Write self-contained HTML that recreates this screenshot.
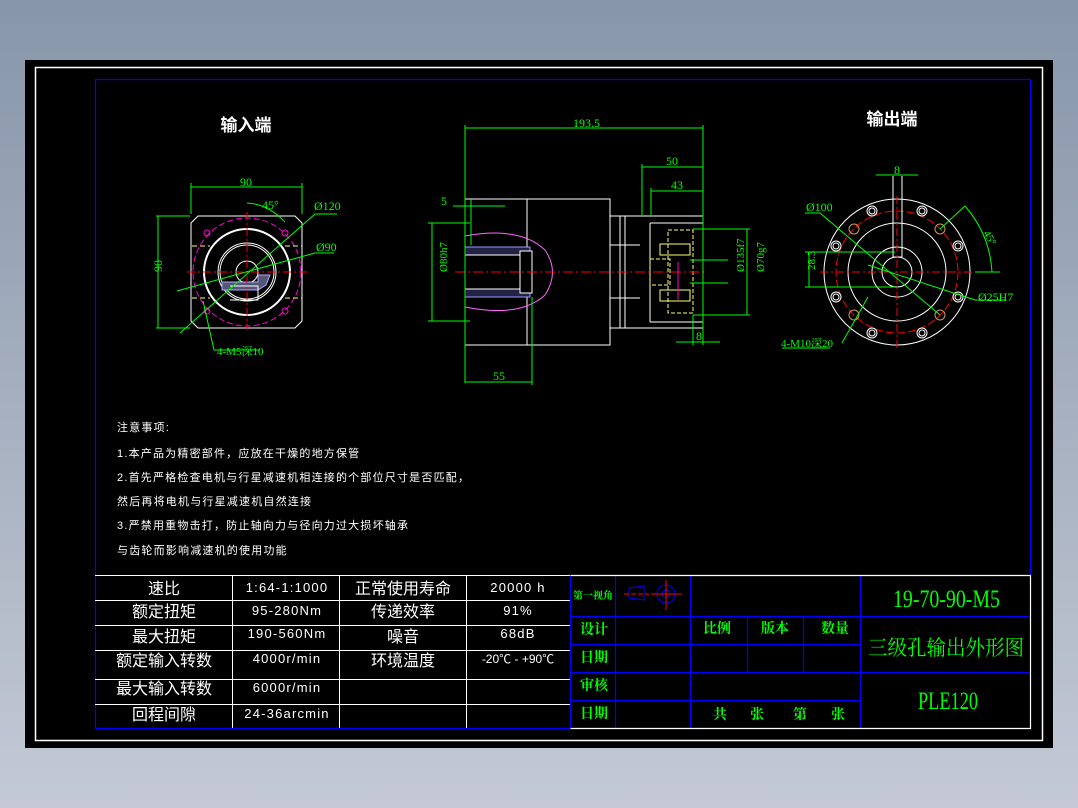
<!DOCTYPE html>
<html><head><meta charset="utf-8"><style>
html,body{margin:0;padding:0;width:1078px;height:808px;overflow:hidden;background:linear-gradient(#8796aa,#c4c9d5);}
svg{position:absolute;left:0;top:0}
.s{font-family:"Liberation Sans","Noto Sans CJK SC",sans-serif;}
.r{font-family:"Liberation Serif","Noto Serif CJK SC",serif;}
</style></head><body>
<svg width="1078" height="808" viewBox="0 0 1078 808">
<rect x="25" y="60" width="1028" height="688" fill="#000"/>
<rect x="35.5" y="67.5" width="1007" height="673" fill="none" stroke="#fff" stroke-width="1.5"/>
<rect x="95.5" y="79.5" width="935" height="649" fill="none" stroke="#00f" stroke-width="1.2"/>

<g class="s">
<text x="246" y="131" fill="#fff" font-size="17" font-weight="bold" text-anchor="middle">输入端</text>
<text x="892" y="125" fill="#fff" font-size="17" font-weight="bold" text-anchor="middle">输出端</text>
</g>

<!-- INPUT END VIEW -->
<g fill="none">
<path d="M198 216 H295 L302 223 V321 L295 328 H198 L191 321 V223 Z" stroke="#fff"/>
<circle cx="247" cy="272" r="54" stroke="#f0c" stroke-dasharray="6 3"/>
<circle cx="247" cy="272" r="43" stroke="#fff" stroke-width="2"/>
<circle cx="247" cy="272" r="29" stroke="#fff"/>
<circle cx="247" cy="272" r="27" stroke="#fff"/>
<circle cx="247" cy="272" r="11" stroke="#fff"/>
<path d="M222 282 L258 282 L258 275 L270 275 L266 285 L258 290 L222 290 Z" fill="#557" stroke="#aaf"/>
<path d="M230 286 H258 V300 H230" stroke="#fff"/>
<g stroke="#f0c"><circle cx="207" cy="233" r="3"/><circle cx="285" cy="233" r="3"/><circle cx="207" cy="311" r="3"/><circle cx="285" cy="311" r="3"/></g>
<g stroke="#f00" stroke-dasharray="8 3 2 3"><line x1="187" y1="272" x2="307" y2="272"/><line x1="247" y1="212" x2="247" y2="330"/></g>
<g stroke="#ff6" stroke-dasharray="5 3"><line x1="192" y1="246" x2="210" y2="246"/><line x1="285" y1="246" x2="302" y2="246"/><line x1="192" y1="298" x2="210" y2="298"/><line x1="285" y1="298" x2="302" y2="298"/></g>
<g stroke="#0f0">
<line x1="191" y1="183" x2="191" y2="214"/><line x1="302" y1="183" x2="302" y2="214"/><line x1="191" y1="187" x2="302" y2="187"/>
<line x1="156" y1="216" x2="190" y2="216"/><line x1="156" y1="328" x2="190" y2="328"/><line x1="158" y1="216" x2="158" y2="328"/>
<line x1="180" y1="333" x2="315" y2="214"/><line x1="315" y1="214" x2="337" y2="214"/>
<line x1="177" y1="291" x2="315" y2="253"/><line x1="315" y1="253" x2="334" y2="253"/>
<line x1="203" y1="301" x2="214" y2="350"/><line x1="214" y1="350" x2="260" y2="350"/>
<path d="M247 203 Q268 204 285 222"/>
</g>
</g>
<g fill="#0f0" font-size="12" class="r">
<text x="240" y="186">90</text><text x="314" y="210">Ø120</text><text x="316" y="251">Ø90</text>
<text x="262" y="209">45°</text>
<text x="156" y="278" transform="rotate(-90 156 272)">90</text>
<text x="217" y="355" font-size="11">4-M5深10</text>
</g>

<!-- SIDE VIEW -->
<g fill="none">
<rect x="465" y="199" width="145" height="146" stroke="#fff"/>
<line x1="527" y1="199" x2="527" y2="345" stroke="#fff"/>
<path d="M610 216 H703 V328 H610" stroke="#fff"/>
<line x1="620" y1="216" x2="620" y2="328" stroke="#fff"/><line x1="625" y1="216" x2="625" y2="328" stroke="#fff"/>
<line x1="610" y1="245" x2="640" y2="245" stroke="#fff"/><line x1="610" y1="298" x2="640" y2="298" stroke="#fff"/>
<path d="M650 223 V322" stroke="#fff"/><path d="M650 223 H703 M650 322 H703" stroke="#fff"/>
<rect x="668" y="230" width="25" height="83" stroke="#ff6" stroke-dasharray="4 2"/>
<rect x="650" y="259" width="20" height="26" stroke="#ff6" stroke-dasharray="4 2"/>
<path d="M660 244 H690 V255 H660 Z M660 290 H690 V301 H660 Z" stroke="#ff6"/>
<path d="M465 236 Q520 226 545 250 Q560 272 545 295 Q520 318 465 307" stroke="#f6f"/>
<rect x="465" y="247" width="65" height="50" fill="#224" stroke="#99f"/>
<rect x="465" y="255" width="55" height="34" fill="#000" stroke="#fff"/>
<rect x="520" y="251" width="12" height="42" fill="#000" stroke="#fff"/>
<line x1="455" y1="272" x2="705" y2="272" stroke="#f00" stroke-dasharray="10 3 2 3"/>
<line x1="678" y1="262" x2="678" y2="300" stroke="#f0c"/>
<g stroke="#0f0">
<line x1="465" y1="125" x2="465" y2="383"/><line x1="703" y1="125" x2="703" y2="345"/><line x1="465" y1="128" x2="703" y2="128"/>
<line x1="642" y1="164" x2="642" y2="215"/><line x1="642" y1="167" x2="703" y2="167"/>
<line x1="651" y1="188" x2="651" y2="215"/><line x1="651" y1="191" x2="703" y2="191"/>
<line x1="453" y1="206" x2="505" y2="206"/><line x1="471" y1="199" x2="471" y2="245"/>
<line x1="428" y1="223" x2="470" y2="223"/><line x1="428" y1="321" x2="470" y2="321"/><line x1="432" y1="223" x2="432" y2="321"/>
<line x1="465" y1="382" x2="532" y2="382"/><line x1="532" y1="297" x2="532" y2="385"/>
<line x1="693" y1="229" x2="750" y2="229"/><line x1="693" y1="315" x2="750" y2="315"/><line x1="747" y1="229" x2="747" y2="315"/>
<line x1="690" y1="260" x2="728" y2="260"/><line x1="690" y1="283" x2="728" y2="283"/>
<line x1="676" y1="342" x2="720" y2="342"/><line x1="693" y1="315" x2="693" y2="345"/>
</g>
</g>
<g fill="#0f0" font-size="12" class="r">
<text x="573" y="127">193.5</text><text x="666" y="165">50</text><text x="671" y="189">43</text>
<text x="441" y="205">5</text><text x="493" y="380">55</text><text x="696" y="340">8</text>
<text x="429" y="290" transform="rotate(-90 429 272)" font-size="11">Ø80h7</text>
<text x="726" y="290" transform="rotate(-90 726 272)" font-size="11">Ø135f7</text>
<text x="746" y="290" transform="rotate(-90 746 272)" font-size="11">Ø70g7</text>
</g>

<!-- OUTPUT END -->
<g fill="none">
<circle cx="897" cy="272" r="73" stroke="#fff"/>
<circle cx="897" cy="272" r="61" stroke="#f00" stroke-dasharray="8 3"/>
<circle cx="897" cy="272" r="49" stroke="#fff"/>
<circle cx="897" cy="272" r="25" stroke="#fff"/>
<circle cx="897" cy="272" r="15" stroke="#fff"/>
<g stroke="#fff">
<circle cx="872" cy="211" r="5"/><circle cx="922" cy="211" r="5"/><circle cx="836" cy="246" r="5"/><circle cx="958" cy="246" r="5"/>
<circle cx="836" cy="297" r="5"/><circle cx="958" cy="297" r="5"/><circle cx="872" cy="333" r="5"/><circle cx="922" cy="333" r="5"/>
<circle cx="872" cy="211" r="3"/><circle cx="922" cy="211" r="3"/><circle cx="836" cy="246" r="3"/><circle cx="958" cy="246" r="3"/>
<circle cx="836" cy="297" r="3"/><circle cx="958" cy="297" r="3"/><circle cx="872" cy="333" r="3"/><circle cx="922" cy="333" r="3"/>
</g>
<g stroke="#c96"><circle cx="854" cy="229" r="5"/><circle cx="940" cy="229" r="5"/><circle cx="854" cy="315" r="5"/><circle cx="940" cy="315" r="5"/></g>
<path d="M893 176 V257 M902 176 V257 M893 257 H902" stroke="#fff"/>
<g stroke="#f00" stroke-dasharray="8 3 2 3"><line x1="820" y1="272" x2="975" y2="272"/><line x1="897" y1="196" x2="897" y2="348"/></g>
<g stroke="#0f0">
<line x1="876" y1="175" x2="918" y2="175"/>
<line x1="805" y1="213" x2="820" y2="213"/><line x1="820" y1="213" x2="940" y2="315"/>
<line x1="805" y1="252" x2="895" y2="252"/><line x1="805" y1="287" x2="895" y2="287"/><line x1="809" y1="252" x2="809" y2="287"/>
<line x1="868" y1="265" x2="975" y2="300"/><line x1="975" y1="300" x2="1005" y2="300"/>
<line x1="842" y1="343" x2="868" y2="297"/><line x1="782" y1="348" x2="830" y2="348"/>
<line x1="940" y1="229" x2="965" y2="206"/><line x1="975" y1="272" x2="1000" y2="272"/>
<path d="M965 206 Q990 235 992 272"/>
</g>
</g>
<g fill="#0f0" font-size="12" class="r">
<text x="894" y="174">8</text><text x="806" y="211">Ø100</text><text x="978" y="301">Ø25H7</text>
<text x="781" y="347" font-size="11">4-M10深20</text>
<text x="805" y="280" transform="rotate(-90 805 270)" font-size="11">28.3</text>
<text x="983" y="233" transform="rotate(60 983 233)" font-size="11">45°</text>
</g>

<!-- NOTES -->
<g fill="#fff" font-size="11" letter-spacing="1.2" class="s">
<text x="117" y="431">注意事项:</text>
<text x="117" y="457">1.本产品为精密部件，应放在干燥的地方保管</text>
<text x="117" y="481">2.首先严格检查电机与行星减速机相连接的个部位尺寸是否匹配，</text>
<text x="117" y="505">然后再将电机与行星减速机自然连接</text>
<text x="117" y="529">3.严禁用重物击打，防止轴向力与径向力过大损坏轴承</text>
<text x="117" y="554">与齿轮而影响减速机的使用功能</text>
</g>

<!-- LEFT TABLE -->
<g stroke="#fff" fill="none">
<line x1="95" y1="575.5" x2="570" y2="575.5"/>
<line x1="95" y1="600.5" x2="570" y2="600.5"/><line x1="95" y1="625.5" x2="570" y2="625.5"/>
<line x1="95" y1="650.5" x2="570" y2="650.5"/><line x1="95" y1="679.5" x2="570" y2="679.5"/>
<line x1="95" y1="704.5" x2="570" y2="704.5"/>
<line x1="232.5" y1="575" x2="232.5" y2="728"/><line x1="339.5" y1="575" x2="339.5" y2="728"/><line x1="466.5" y1="575" x2="466.5" y2="728"/>
</g>
<g fill="#fff" font-size="16" text-anchor="middle" class="s">
<text x="164" y="594">速比</text><text x="164" y="617">额定扭矩</text><text x="164" y="642">最大扭矩</text>
<text x="164" y="666">额定输入转数</text><text x="164" y="694">最大输入转数</text><text x="164" y="720">回程间隙</text>
<text x="403" y="594">正常使用寿命</text><text x="403" y="617">传递效率</text><text x="403" y="642">噪音</text><text x="403" y="666">环境温度</text>
</g>
<g fill="#fff" font-size="13" text-anchor="middle" letter-spacing="1.2" class="s">
<text x="287" y="592">1:64-1:1000</text><text x="287" y="615">95-280Nm</text><text x="287" y="638">190-560Nm</text>
<text x="287" y="663">4000r/min</text><text x="287" y="692">6000r/min</text><text x="287" y="718">24-36arcmin</text>
<text x="518" y="592">20000 h</text><text x="518" y="615">91%</text><text x="518" y="638">68dB</text>
<text x="518" y="663" font-size="12" letter-spacing="0">-20℃ - +90℃</text>
</g>

<!-- RIGHT TITLE BLOCK -->
<g stroke="#00f" fill="none" stroke-width="1.2">
<line x1="570.5" y1="575" x2="570.5" y2="729"/><line x1="615.5" y1="575" x2="615.5" y2="729"/>
<line x1="690.5" y1="575" x2="690.5" y2="729"/><line x1="860.5" y1="575" x2="860.5" y2="729"/>
<line x1="747.5" y1="616" x2="747.5" y2="672"/><line x1="803.5" y1="616" x2="803.5" y2="672"/>
<line x1="570" y1="616.5" x2="1030" y2="616.5"/><line x1="570" y1="644.5" x2="860" y2="644.5"/>
<line x1="570" y1="672.5" x2="1030" y2="672.5"/><line x1="570" y1="700.5" x2="860" y2="700.5"/>
<line x1="95" y1="728.5" x2="570" y2="728.5"/>
</g>
<path d="M570.5 575.5 H1030.5 V728.5 H570.5" fill="none" stroke="#fff" stroke-width="1.2"/>
<g fill="none">
<path d="M644 586 L644 600 L629 598 L629 588 Z" stroke="#00f"/>
<circle cx="666" cy="594" r="9" stroke="#00f"/><circle cx="666" cy="594" r="4" stroke="#00f"/>
<line x1="624" y1="594" x2="649" y2="594" stroke="#f00" stroke-dasharray="5 2"/>
<line x1="651" y1="594" x2="682" y2="594" stroke="#f00"/><line x1="666" y1="580" x2="666" y2="610" stroke="#f00"/>
</g>
<g fill="#0f0" font-size="14" font-weight="bold" class="r">
<text x="573" y="599" font-size="10">第一视角</text>
<text x="580" y="634">设计</text><text x="580" y="662">日期</text><text x="580" y="690">审核</text><text x="580" y="718">日期</text>
<text x="703" y="633">比例</text><text x="761" y="633">版本</text><text x="821" y="633">数量</text>
<text x="713" y="719">共</text><text x="750" y="719">张</text><text x="793" y="719">第</text><text x="831" y="719">张</text>
</g>
<g fill="#0f0" class="r">
<text x="893" y="607" font-size="25" textLength="107" lengthAdjust="spacingAndGlyphs">19-70-90-M5</text>
<text x="868" y="655" font-size="21" textLength="156" lengthAdjust="spacingAndGlyphs">三级孔输出外形图</text>
<text x="918" y="709" font-size="25" textLength="60" lengthAdjust="spacingAndGlyphs">PLE120</text>
</g>
</svg>
</body></html>
